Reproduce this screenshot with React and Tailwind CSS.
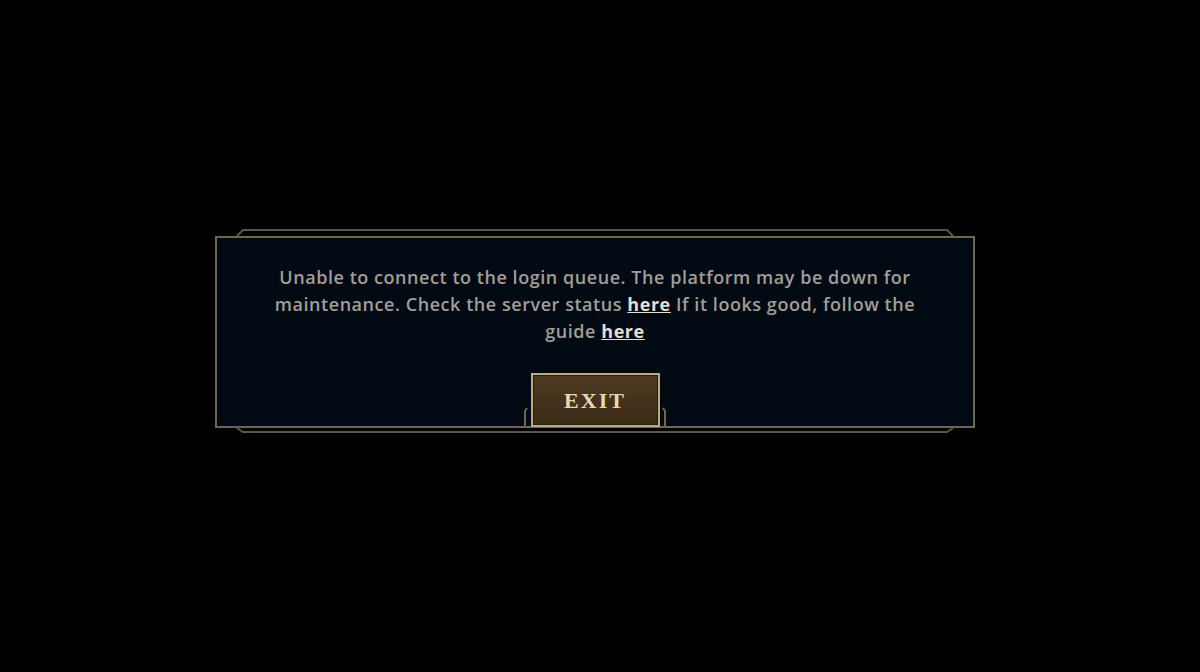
export default function App() {
  return (
    <div className="w-full h-[672px] bg-black flex items-center justify-center pr-[10px] pb-[8px]">
      <div className="relative w-[760px] h-[192px] bg-[#010a13] border-2 border-[#6f6650] flex flex-col items-center">
        <svg
          className="absolute -left-[2px] -top-[2px] overflow-visible pointer-events-none"
          width="760"
          height="192"
          viewBox="0 0 760 192"
          fill="none"
        >
          <path d="M22 0 L28 -6 L732 -6 L738 0" stroke="#5e5644" strokeWidth="2" />
          <path d="M22 192 L28 196 L732 196 L738 192" stroke="#5e5644" strokeWidth="2" />
          <path d="M310 190 L310 175 L312 172" stroke="#6f6650" strokeWidth="2" />
          <path d="M450 190 L450 175 L448 172" stroke="#6f6650" strokeWidth="2" />
        </svg>
        <p
          className="mt-[26px] w-[670px] text-center text-[18px] font-semibold tracking-[0.55px] leading-[27px] text-[#a09e96]"
          style={{ fontFamily: '"Open Sans", "Noto Sans", sans-serif' }}
        >
          Unable to connect to the login queue. The platform may be down for maintenance. Check the server status{' '}
          <a className="font-bold underline text-[#e4ded0]">here</a> If it looks good, follow the guide{' '}
          <a className="font-bold underline text-[#e4ded0]">here</a>
        </p>
        <button
          className="relative mt-auto mb-[-1px] w-[129px] h-[54px] border-2 border-[#b9ab86] bg-gradient-to-b from-[#4e3a22] to-[#3b2b17] text-[#e6d8b6] text-[22px] font-bold tracking-[2px] shadow-[inset_0_0_0_1px_#2a1e10]"
          style={{ fontFamily: '"Liberation Serif", serif' }}
        >
          EXIT
        </button>
      </div>
    </div>
  )
}
